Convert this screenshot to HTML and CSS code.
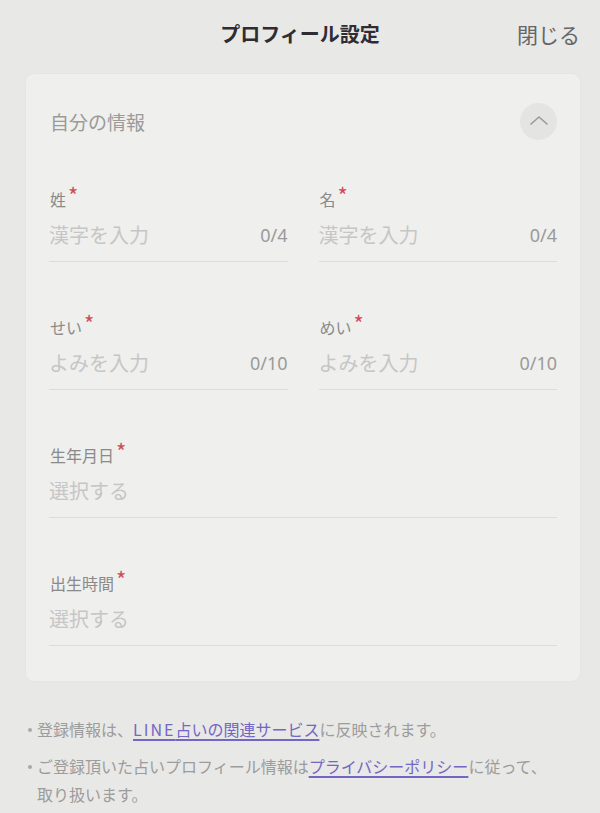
FILE: index.html
```html
<!DOCTYPE html>
<html lang="ja">
<head>
<meta charset="utf-8">
<title>プロフィール設定</title>
<link rel="stylesheet" href="styles.css">
</head>
<body>
<div class="page">
  <header class="topbar">
    <div class="topbar-side"></div>
    <h1 class="title">プロフィール設定</h1>
    <div class="topbar-side topbar-right"><span class="close">閉じる</span></div>
  </header>

  <section class="card">
    <div class="card-head">
      <h2 class="card-title">自分の情報</h2>
      <button class="toggle" type="button" aria-label="閉じる">
        <svg width="20" height="10" viewBox="0 0 20 10"><path d="M2 9 L10 2 L18 9" fill="none" stroke="#999999" stroke-width="1.6" stroke-linecap="round" stroke-linejoin="round"/></svg>
      </button>
    </div>

    <div class="fields">
      <div class="field">
        <div class="label">姓<span class="req">*</span></div>
        <div class="input"><span class="ph">漢字を入力</span><span class="count">0/4</span></div>
      </div>
      <div class="field">
        <div class="label">名<span class="req">*</span></div>
        <div class="input"><span class="ph">漢字を入力</span><span class="count">0/4</span></div>
      </div>
      <div class="field">
        <div class="label">せい<span class="req">*</span></div>
        <div class="input"><span class="ph">よみを入力</span><span class="count">0/10</span></div>
      </div>
      <div class="field">
        <div class="label">めい<span class="req">*</span></div>
        <div class="input"><span class="ph">よみを入力</span><span class="count">0/10</span></div>
      </div>
      <div class="field wide">
        <div class="label">生年月日<span class="req">*</span></div>
        <div class="input"><span class="ph">選択する</span></div>
      </div>
      <div class="field wide">
        <div class="label">出生時間<span class="req">*</span></div>
        <div class="input"><span class="ph">選択する</span></div>
      </div>
    </div>
  </section>

  <ul class="notes">
    <li><span>登録情報は、</span><a class="link" href="#"><span class="latin">LINE</span>占いの関連サービス</a><span>に反映されます。</span></li>
    <li><span>ご登録頂いた占いプロフィール情報は</span><a class="link" href="#">プライバシーポリシー</a><span>に従って、</span><br><span>取り扱います。</span></li>
  </ul>
</div>
</body>
</html>
```

FILE: styles.css
```css
* { box-sizing: border-box; }

html, body {
  margin: 0;
  padding: 0;
}

body {
  background: #e8e8e6;
  font-family: "Noto Sans CJK JP", "Noto Sans", sans-serif;
  color: #333;
  width: 600px;
  height: 813px;
  overflow: hidden;
}

.page {
  display: flex;
  flex-direction: column;
}

.topbar {
  display: grid;
  grid-template-columns: 1fr auto 1fr;
  align-items: center;
  height: 68px;
  margin-bottom: 6px;
  padding-right: 20px;
}

.title {
  margin: 0;
  font-size: 20px;
  font-weight: 700;
  color: #2f2d33;
  line-height: 68px;
  padding-left: 20px;
}

.topbar-right {
  display: flex;
  justify-content: flex-end;
}

.close {
  font-size: 21px;
  color: #666666;
  line-height: 1;
}

.card {
  margin: 0 20px 0 26px;
  background: #efefed;
  border-radius: 8px;
  padding: 28px 23px 35px 23px;
  box-shadow: 0 0 2px rgba(0, 0, 0, 0.05);
}

.card-head {
  display: flex;
  justify-content: space-between;
  align-items: center;
  height: 38px;
  margin-bottom: 48px;
}

.card-title {
  margin: 0;
  font-size: 19px;
  font-weight: 400;
  color: #9a9a9a;
  padding-left: 1px;
}

.toggle {
  width: 37px;
  height: 37px;
  border-radius: 50%;
  border: none;
  background: #e4e4e2;
  display: flex;
  align-items: center;
  justify-content: center;
  padding: 0 0 3px 0;
}

.fields {
  display: grid;
  grid-template-columns: 1fr 1fr;
  column-gap: 31px;
  row-gap: 54px;
}

.field.wide {
  grid-column: 1 / -1;
}

.label {
  font-size: 16px;
  line-height: 22px;
  color: #8a8a8a;
  padding-left: 1px;
}

.req {
  color: #d34a5c;
  font-size: 22px;
  position: relative;
  top: -2px;
  margin-left: 2px;
  line-height: 0;
}

.input {
  display: flex;
  justify-content: space-between;
  align-items: center;
  margin-top: 9px;
  height: 43px;
  padding-bottom: 10px;
  border-bottom: 1px solid #dcdcda;
}

.ph {
  font-size: 20px;
  line-height: 32px;
  color: #c6c6c6;
}

.count {
  font-size: 18px;
  line-height: 32px;
  color: #9a9a9a;
  font-family: "Noto Sans", "Noto Sans CJK JP", sans-serif;
}

.notes {
  list-style: none;
  margin: 34px 30px 0 0;
  padding: 0 0 0 37px;
  font-size: 16px;
  line-height: 28px;
  color: #9c9c9c;
  display: flex;
  flex-direction: column;
  gap: 9px;
}

.notes li {
  position: relative;
}

.notes li::before {
  content: "";
  position: absolute;
  left: -9px;
  top: 13px;
  width: 4px;
  height: 4px;
  border-radius: 50%;
  background: #a8a8a8;
}

.link {
  color: #7466c4;
  text-decoration: underline;
  text-decoration-thickness: 1.5px;
  text-underline-offset: 3px;
}

.latin {
  letter-spacing: 2px;
}
```
